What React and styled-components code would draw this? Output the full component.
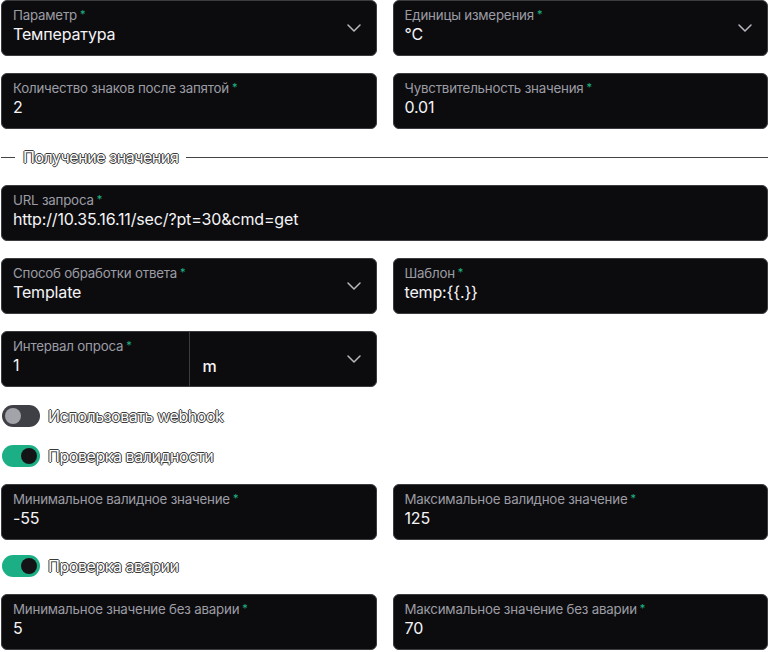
import React from 'react';
import styled, { createGlobalStyle } from 'styled-components';

const GlobalStyle = createGlobalStyle`
  html, body {
    margin: 0;
    padding: 0;
    background: #ffffff;
    font-family: Inter, "Noto Sans", sans-serif;
  }
`;

const Form = styled.div`
  width: 767px;
  padding: 0 1px;
  display: flex;
  flex-direction: column;
  gap: 17px;
`;

const Row = styled.div`
  display: grid;
  grid-template-columns: 1fr 1fr;
  gap: 16px;
`;

const Field = styled.div`
  position: relative;
  height: 56px;
  box-sizing: border-box;
  background: #0c0c0f;
  border: 1px solid #3b3b40;
  border-radius: 6px;
  display: flex;
  align-items: stretch;
`;

const FieldBody = styled.div`
  flex: 1;
  min-width: 0;
  padding: 5px 11px 0;
  display: flex;
  flex-direction: column;
`;

const Label = styled.div`
  font-size: 13.3px;
  line-height: 16px;
  height: 16px;
  color: #9c9ca4;
  letter-spacing: -0.2px;
  span {
    color: #1fb584;
    margin-left: 3px;
    font-size: 11px;
    vertical-align: 2px;
  }
`;

const Value = styled.div`
  margin-top: 1px;
  font-size: 16px;
  line-height: 22px;
  color: #f4f4f6;
  font-weight: 400;
  letter-spacing: -0.15px;
`;

const Chevron = styled.div`
  width: 40px;
  display: flex;
  align-items: center;
  justify-content: center;
  padding-right: 2px;
  svg { display: block; }
`;

const Unit = styled.div`
  width: 187px;
  border-left: 1px solid #3b3b40;
  display: flex;
  align-items: stretch;
  padding-left: 13px;
  box-sizing: border-box;
`;

const UnitValue = styled.div`
  flex: 1;
  padding-top: 24px;
  font-size: 16px;
  color: #f4f4f6;
  font-weight: 500;
`;

const Divider = styled.div`
  display: flex;
  align-items: center;
  height: 22px;
  gap: 8px;
  &::before, &::after {
    content: '';
    height: 1px;
    background: #444448;
  }
  &::before { width: 14px; }
  &::after { flex: 1; }
`;

const HaloText = styled.span`
  font-size: 16px;
  color: #ffffff;
  letter-spacing: -0.45px;
  text-shadow: -1px 0 #3a3a3a, 1px 0 #3a3a3a, 0 -1px #3a3a3a, 0 1px #3a3a3a;
`;

const ToggleRow = styled.div`
  display: flex;
  align-items: center;
  gap: 8px;
  height: 22px;
  margin: ${p => p.$m || '0'};
`;

const Track = styled.div`
  width: 38px;
  height: 22px;
  border-radius: 11px;
  background: ${p => (p.$on ? '#1caf85' : '#3f3f46')};
  position: relative;
  margin-left: 1px;
  &::after {
    content: '';
    position: absolute;
    top: 3px;
    left: ${p => (p.$on ? '19px' : '3px')};
    width: 16px;
    height: 16px;
    border-radius: 50%;
    background: ${p => (p.$on ? '#141416' : '#a3a3aa')};
  }
`;

const HalfRow = styled.div`
  display: grid;
  grid-template-columns: 1fr 1fr;
  gap: 16px;
`;

function ChevronIcon() {
  return (
    <Chevron>
      <svg width="14" height="8" viewBox="0 0 14 8" fill="none">
        <path d="M1 1l6 6 6-6" stroke="#b8b8be" strokeWidth="1.5" strokeLinecap="round" strokeLinejoin="round" />
      </svg>
    </Chevron>
  );
}

function InputField({ label, value, select }) {
  return (
    <Field>
      <FieldBody>
        <Label>{label}<span>*</span></Label>
        <Value>{value}</Value>
      </FieldBody>
      {select && <ChevronIcon />}
    </Field>
  );
}

function Toggle({ on, children, m }) {
  return (
    <ToggleRow $m={m}>
      <Track $on={on} />
      <HaloText>{children}</HaloText>
    </ToggleRow>
  );
}

export default function App() {
  return (
    <>
      <GlobalStyle />
      <Form>
        <Row>
          <InputField label="Параметр" value="Температура" select />
          <InputField label="Единицы измерения" value="°C" select />
        </Row>
        <Row>
          <InputField label="Количество знаков после запятой" value="2" />
          <InputField label="Чувствительность значения" value="0.01" />
        </Row>
        <Divider>
          <HaloText>Получение значения</HaloText>
        </Divider>
        <InputField label="URL запроса" value="http://10.35.16.11/sec/?pt=30&cmd=get" />
        <Row>
          <InputField label="Способ обработки ответа" value="Template" select />
          <InputField label="Шаблон" value="temp:{{.}}" />
        </Row>
        <HalfRow>
          <Field>
            <FieldBody>
              <Label>Интервал опроса<span>*</span></Label>
              <Value>1</Value>
            </FieldBody>
            <Unit>
              <UnitValue>m</UnitValue>
              <ChevronIcon />
            </Unit>
          </Field>
        </HalfRow>
        <Toggle on={false} m="1px 0 0">Использовать webhook</Toggle>
        <Toggle on m="1px 0 0">Проверка валидности</Toggle>
        <Row>
          <InputField label="Минимальное валидное значение" value="-55" />
          <InputField label="Максимальное валидное значение" value="125" />
        </Row>
        <Toggle on m="-2px 0 0">Проверка аварии</Toggle>
        <Row>
          <InputField label="Минимальное значение без аварии" value="5" />
          <InputField label="Максимальное значение без аварии" value="70" />
        </Row>
      </Form>
    </>
  );
}
